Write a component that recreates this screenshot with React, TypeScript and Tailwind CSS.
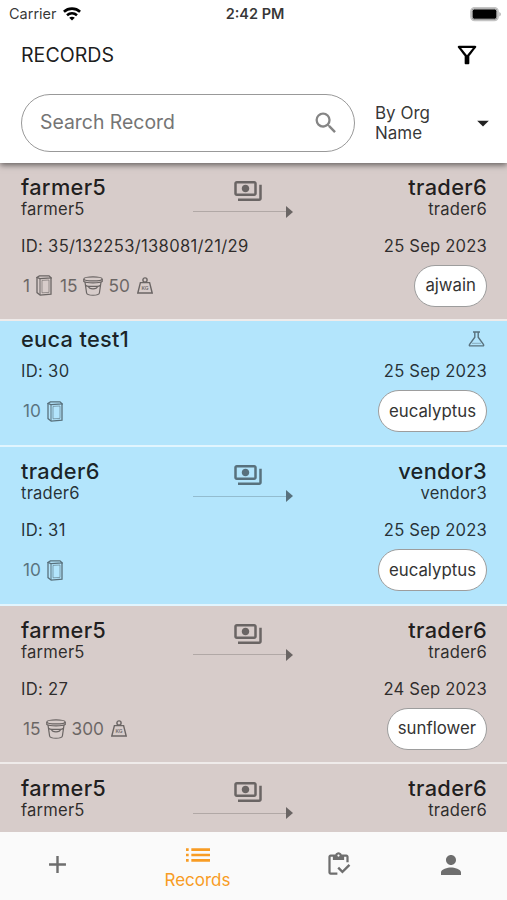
import {
  MdAdd,
  MdArrowDropDown,
  MdList,
  MdOutlineFilterAlt,
  MdOutlineInventory,
  MdOutlinePayments,
  MdPerson,
  MdSearch,
} from "react-icons/md";

type Unit = { count: string; kind: "bag" | "bucket" | "weight" };

type RecordItem = {
  from: string;
  to?: string;
  id?: string;
  date?: string;
  crop?: string;
  units?: Unit[];
};

const records: RecordItem[] = [
  {
    from: "farmer5",
    to: "trader6",
    id: "35/132253/138081/21/29",
    date: "25 Sep 2023",
    crop: "ajwain",
    units: [
      { count: "1", kind: "bag" },
      { count: "15", kind: "bucket" },
      { count: "50", kind: "weight" },
    ],
  },
  {
    from: "euca test1",
    id: "30",
    date: "25 Sep 2023",
    crop: "eucalyptus",
    units: [{ count: "10", kind: "bag" }],
  },
  {
    from: "trader6",
    to: "vendor3",
    id: "31",
    date: "25 Sep 2023",
    crop: "eucalyptus",
    units: [{ count: "10", kind: "bag" }],
  },
  {
    from: "farmer5",
    to: "trader6",
    id: "27",
    date: "24 Sep 2023",
    crop: "sunflower",
    units: [
      { count: "15", kind: "bucket" },
      { count: "300", kind: "weight" },
    ],
  },
  { from: "farmer5", to: "trader6" },
];

function UnitIcon({ kind }: { kind: Unit["kind"] }) {
  if (kind === "bag") {
    return (
      <svg className="ml-[6px] mr-2 h-[21px] w-4" viewBox="0 0 16 21" fill="none" stroke="currentColor">
        <path d="M1 2.4 3.8 3.6 15 2.8 13 .9 3.4 .9Z" strokeWidth="1.3" />
        <path d="M1 2.4V17.6l3.2 2.6L15 19.2V2.8" strokeWidth="1.3" />
        <path d="M4 3.6v16.4" />
        <path d="M6 5.4 13 5V17.4L6 17.8Z" strokeWidth=".6" />
      </svg>
    );
  }
  if (kind === "bucket") {
    return (
      <svg className="ml-[5px] mr-[6px] h-5 w-5" viewBox="0 0 20 20" fill="none" stroke="currentColor" strokeWidth="1.2">
        <ellipse cx="10" cy="2.9" rx="9.2" ry="2" />
        <path d="M.8 3v2.6c3 1.8 15.4 1.8 18.4 0V3" />
        <path d="M2 6.2 3.6 17c.5 3 12.3 3 12.8 0L18 6.2" />
        <path d="M2.5 9.2c1 .9 2 1.1 3.4 1.2h8.2c1.4-.1 2.4-.3 3.4-1.2M5.4 10.4c.8 3.2 8.4 3.2 9.2 0" />
      </svg>
    );
  }
  return (
    <svg className="ml-[7px] h-[17px] w-4" viewBox="0 0 16 17" fill="none" stroke="currentColor" strokeWidth="1.4">
      <circle cx="8" cy="3" r="2.1" />
      <path d="M3.4 5.6h9.2L15.2 16H.8Z" />
      <text x="8" y="12.8" fontSize="5" textAnchor="middle" fill="currentColor" stroke="none" fontWeight="600">
        KG
      </text>
    </svg>
  );
}

function Flask() {
  return (
    <svg className="mr-[2px] h-4 w-[17px] opacity-50" viewBox="0 0 17 16" fill="none" stroke="black" strokeWidth="1.4">
      <path d="M5 1h7M6.8 1v5.2L1.6 13.4c-.6.9-.3 1.5.6 1.5h12.6c.9 0 1.2-.6.6-1.5L10.2 6.2V1" />
      <path d="M4 12.3h9" strokeWidth=".5" />
    </svg>
  );
}

function Transfer() {
  return (
    <div className="flex w-[100px] flex-col items-center pt-px opacity-50">
      <MdOutlinePayments className="ml-[10px] size-[30px] text-black" />
      <div className="flex h-3 w-full items-center">
        <div className="h-px flex-1 bg-black/35" />
        <div className="h-0 w-0 border-y-[6px] border-l-[7px] border-y-transparent border-l-black" />
      </div>
    </div>
  );
}

function Name({ children }: { children: string }) {
  return <h2 className="h-6 text-[21.8px] font-medium leading-6 tracking-[0.3px] text-black/85">{children}</h2>;
}

function RecordRow({ item, tone }: { item: RecordItem; tone: string }) {
  return (
    <div
      className={`shrink-0 border-b-2 border-white/60 pl-[21px] pr-5 ${tone} ${item.to ? "h-[158.67px] pt-3" : "h-[126px] pt-[6px]"}`}
    >
      {item.to ? (
        <div className="flex h-[61px] justify-between">
          <div className="w-[172px]">
            <Name>{item.from}</Name>
            <p className="h-5 text-[16.6px] leading-5 tracking-[0.2px]">{item.from}</p>
          </div>
          <Transfer />
          <div className="w-[194px] text-right">
            <Name>{item.to}</Name>
            <p className="h-5 text-[16.6px] leading-5 tracking-[0.2px]">{item.to}</p>
          </div>
        </div>
      ) : (
        <div className="flex h-[34px] justify-between">
          <Name>{item.from}</Name>
          <div className="pt-1">
            <Flask />
          </div>
        </div>
      )}
      {item.id && (
        <div className="flex justify-between text-[16.6px] leading-5">
          <span className="tracking-[0.3px]">ID: {item.id}</span>
          <span className="tracking-[0.2px]">{item.date}</span>
        </div>
      )}
      {item.units && (
        <div className="mt-[9px] flex items-center justify-between">
          <div className="flex items-center pl-[2px] text-[17.3px] text-black opacity-50">
            {item.units.map((unit) => (
              <div key={unit.kind} className="flex items-center">
                <span>{unit.count}</span>
                <UnitIcon kind={unit.kind} />
              </div>
            ))}
          </div>
          <span className="flex h-[42px] items-center rounded-full border border-[#9d9d9d] bg-white px-[10px] text-[16.8px] text-[#333]">
            {item.crop}
          </span>
        </div>
      )}
    </div>
  );
}

function StatusBar() {
  return (
    <div className="grid h-7 grid-cols-3 items-center pl-[9px] pr-[6px] text-[14.5px]">
      <div className="flex items-center gap-[6px]">
        <span>Carrier</span>
        <svg className="h-[14px] w-[18px]" viewBox="0 0 18 14" fill="none" stroke="black" strokeWidth="2.6">
          <path d="M.9 4.8c4.6-4.2 11.6-4.2 16.2 0" />
          <path d="M4 8.3c3-2.6 7-2.6 10 0" />
          <path d="M9 13.6 6.2 10.8c1.6-1.4 4-1.4 5.6 0Z" fill="black" stroke="none" />
        </svg>
      </div>
      <span className="text-center font-semibold">2:42 PM</span>
      <svg className="h-[15px] w-[31px] justify-self-end" viewBox="0 0 31 15">
        <rect x="1" y=".8" width="27" height="12.6" rx="3.6" fill="black" stroke="#c4c4c4" strokeWidth="1.8" />
        <rect x="2.2" y="2" width="24.6" height="10.2" rx="2.2" fill="black" stroke="#e2e2e2" strokeWidth=".8" />
        <path d="M29.4 5v4.4c1.8-.9 1.8-3.5 0-4.4Z" fill="#aaa" />
      </svg>
    </div>
  );
}

function App() {
  return (
    <div className="flex h-[900px] w-[507px] flex-col overflow-hidden bg-white font-['Inter','Liberation_Sans',sans-serif] text-black/80">
      <header className="relative z-10 h-[162.5px] shrink-0 bg-white shadow-[0_2px_6px_rgba(0,0,0,0.55)]">
        <StatusBar />
        <div className="flex h-[54px] items-center justify-between pl-[21px] pr-[26px]">
          <h1 className="text-[19.6px] leading-6 text-black/90">RECORDS</h1>
          <MdOutlineFilterAlt className="size-[28px] text-black" />
        </div>
        <div className="mt-3 flex items-center pl-[21px]">
          <div className="flex h-[58px] w-[334px] items-center justify-between rounded-full border border-[#999] pl-[18px] pr-[14px]">
            <span className="text-[19.4px] text-[#757575]">Search Record</span>
            <MdSearch className="size-7 text-[#858585]" />
          </div>
          <span className="ml-5 w-[94px] text-[17px] leading-[20.5px]">By Org Name</span>
          <MdArrowDropDown className="-mt-px size-7 text-[#222]" />
        </div>
      </header>

      <main className="flex min-h-0 flex-1 flex-col overflow-hidden">
        {records.map((item, i) => (
          <RecordRow key={i} item={item} tone={i === 1 || i === 2 ? "bg-[#b3e5fc]" : "bg-[#d7ccca]"} />
        ))}
      </main>

      <nav className="flex h-[68px] shrink-0 items-center bg-[#fafafa] pb-[3px] text-[#6e6e6e]">
        <div className="flex w-[114px] justify-center">
          <MdAdd className="size-[29px]" />
        </div>
        <div className="flex w-[167px] flex-col items-center text-[#f89c24]">
          <MdList className="size-[32px]" />
          <span className="-mt-px text-[17px] leading-5">Records</span>
        </div>
        <div className="flex w-[114px] justify-center">
          <MdOutlineInventory className="size-[27px]" />
        </div>
        <div className="flex w-[112px] justify-center">
          <MdPerson className="size-[30px]" />
        </div>
      </nav>
    </div>
  );
}

export default App;
